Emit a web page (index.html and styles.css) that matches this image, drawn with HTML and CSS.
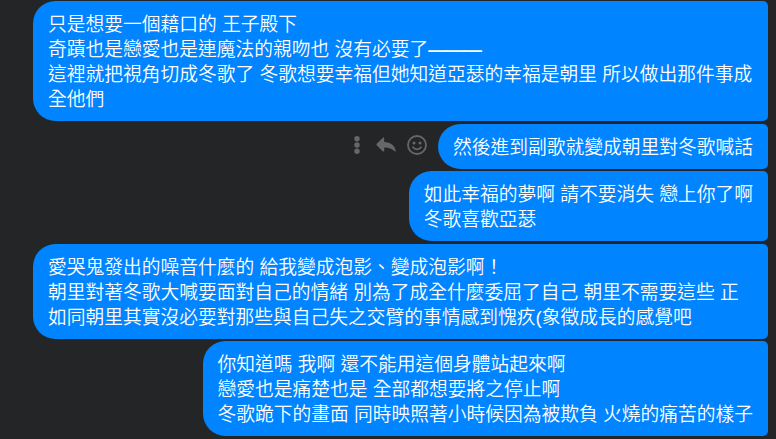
FILE: index.html
```html
<!DOCTYPE html>
<html lang="zh-Hant">
  <head>
    <meta charset="UTF-8" />
    <meta name="viewport" content="width=device-width, initial-scale=1.0" />
    <title>Chat</title>
    <link rel="stylesheet" href="styles.css" />
  </head>
  <body>
    <div class="chat">
      <div class="row">
        <div class="bubble">
          只是想要一個藉口的 王子殿下<br />
          奇蹟也是戀愛也是連魔法的親吻也 沒有必要了<span class="dash">———</span><br />
          這裡就把視角切成冬歌了 冬歌想要幸福但她知道亞瑟的幸福是朝里 所以做出那件事成全他們
        </div>
      </div>
      <div class="row">
        <div class="actions">
          <button class="action" aria-label="更多">
            <svg width="8" height="20" viewBox="0 0 8 20">
              <circle cx="4" cy="3.700" r="2.700" />
              <circle cx="4" cy="10" r="2.700" />
              <circle cx="4" cy="16.300" r="2.700" />
            </svg>
          </button>
          <button class="action" aria-label="回覆">
            <svg width="20" height="20" viewBox="0 0 20 20">
              <path d="M8.2 3.5v3.6c6.2.2 10.8 3.4 11.5 8.8.1.8-.5 1-1 .4-2.500-2.700-5.500-3.900-10.500-3.900v3.300c0 .9-.8 1.200-1.500.6L.7 10.300c-.5-.5-.5-1.100 0-1.600l6-5.800c.7-.6 1.500-.3 1.500.6z" />
            </svg>
          </button>
          <button class="action" aria-label="心情">
            <svg width="20" height="20" viewBox="0 0 20 20">
              <circle class="line" cx="10" cy="10" r="9" />
              <circle cx="7" cy="8" r="1.5" />
              <circle cx="13" cy="8" r="1.5" />
              <path class="line" d="M6 12.3c1.8 2.7 6.2 2.7 8 0" />
            </svg>
          </button>
        </div>
        <div class="bubble">然後進到副歌就變成朝里對冬歌喊話</div>
      </div>
      <div class="row">
        <div class="bubble">
          如此幸福的夢啊 請不要消失 戀上你了啊<br />
          冬歌喜歡亞瑟
        </div>
      </div>
      <div class="row">
        <div class="bubble">
          愛哭鬼發出的噪音什麼的 給我變成泡影、變成泡影啊！<br />
          朝里對著冬歌大喊要面對自己的情緒 別為了成全什麼委屈了自己 朝里不需要這些 正如同朝里其實沒必要對那些與自己失之交臂的事情感到愧疚(象徵成長的感覺吧
        </div>
      </div>
      <div class="row">
        <div class="bubble">
          你知道嗎 我啊 還不能用這個身體站起來啊<br />
          戀愛也是痛楚也是 全部都想要將之停止啊<br />
          冬歌跪下的畫面 同時映照著小時候因為被欺負 火燒的痛苦的樣子
        </div>
      </div>
    </div>
  </body>
</html>
```

FILE: styles.css
```css
body {
  margin: 0;
  background-color: #242526;
  font-family: "Liberation Sans", "Noto Sans CJK TC", sans-serif;
  font-size: 18.75px;
  line-height: 25px;
  color: #fff;
}

.chat {
  display: flex;
  flex-direction: column;
  gap: 2.5px;
  box-sizing: border-box;
  height: 439px;
  padding: 1px 8px 0 33px;
  overflow: hidden;
}

.row {
  display: flex;
  justify-content: flex-end;
  align-items: center;
}

.bubble {
  padding: 11px 15px 9px;
  border-radius: 22.5px 5px 5px 22.5px;
  background-color: #0084ff;
  font-weight: 350;
}

.dash {
  font-weight: bold;
  letter-spacing: -1.2px;
}

.actions {
  display: flex;
  align-items: center;
  gap: 11px;
  margin-right: 11px;
  padding-bottom: 2px;
}

.action {
  display: flex;
  padding: 0;
  border: none;
  background: none;
}

.action:first-child {
  margin-right: 4px;
}

.action svg {
  fill: #65676b;
}

.action .line {
  fill: none;
  stroke: #65676b;
  stroke-width: 1.8;
  stroke-linecap: round;
}
```
